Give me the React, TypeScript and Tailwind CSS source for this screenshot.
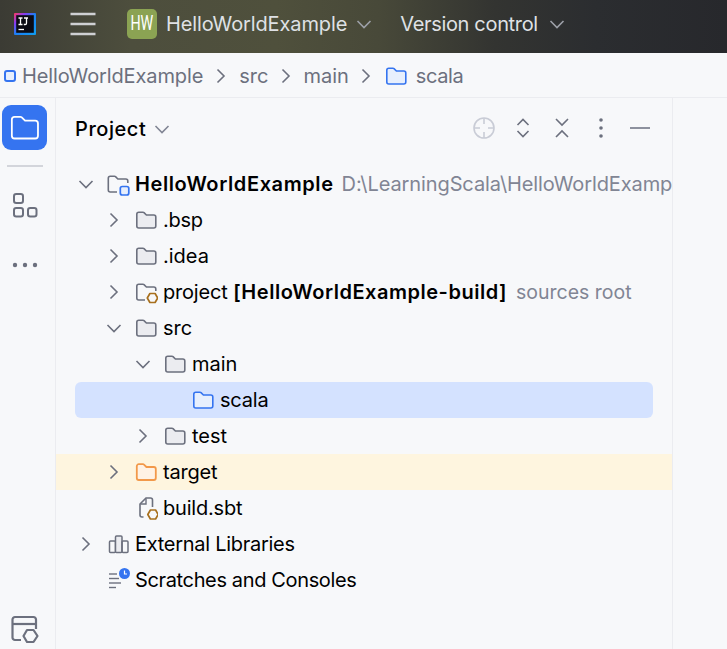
import React from "react";

const Chev = ({ dir, color = "#6c707e", size = 24 }: { dir: "r" | "d"; color?: string; size?: number }) => (
  <svg width={size} height={size} viewBox="0 0 24 24" fill="none" stroke={color} strokeWidth={1.6} className="shrink-0">
    {dir === "r" ? <path d="M8.5 5.5 L15 12 L8.5 18.5" /> : <path d="M5.5 9 L12 15.5 L18.5 9" />}
  </svg>
);

const folderPath = "M2.8 6.2 A2 2 0 0 1 4.8 4.2 H9 A1.5 1.5 0 0 1 10 4.6 L12.4 7 H19.8 A2 2 0 0 1 21.8 9 V18 A2 2 0 0 1 19.8 20 H4.8 A2 2 0 0 1 2.8 18 Z";

const Folder = ({ fill = "#ebecf0", stroke = "#6c707e", w = 1.6 }: { fill?: string; stroke?: string; w?: number }) => (
  <svg width="24" height="24" viewBox="0 0 24 24" className="shrink-0">
    <path d={folderPath} fill={fill} stroke={stroke} strokeWidth={w} />
  </svg>
);

const Hexagon = ({ cx, cy }: { cx: number; cy: number }) => (
  <path
    d={`M${cx - 2.6} ${cy - 4.5} H${cx + 2.6} L${cx + 5.2} ${cy} L${cx + 2.6} ${cy + 4.5} H${cx - 2.6} L${cx - 5.2} ${cy} Z`}
    fill="#f7f8fa"
    stroke="#a8701e"
    strokeWidth={1.7}
    strokeLinejoin="round"
  />
);

const RootIcon = () => (
  <svg width="24" height="24" viewBox="0 0 24 24" className="shrink-0">
    <path d="M11 20 H4.3 A2 2 0 0 1 2.3 18 V6.2 A2 2 0 0 1 4.3 4.2 H8.5 A1.5 1.5 0 0 1 9.5 4.6 L11.9 7 H19.8 A2 2 0 0 1 21.8 9 V11" fill="none" stroke="#6c707e" strokeWidth={1.6} />
    <rect x="14.3" y="14.5" width="8.5" height="8.5" rx="2" fill="#e7effd" stroke="#3574f0" strokeWidth={1.7} />
  </svg>
);

const ProjectFolderIcon = () => (
  <svg width="24" height="24" viewBox="0 0 24 24" className="shrink-0">
    <path d="M11 20 H4.8 A2 2 0 0 1 2.8 18 V6.2 A2 2 0 0 1 4.8 4.2 H9 A1.5 1.5 0 0 1 10 4.6 L12.4 7 H19.8 A2 2 0 0 1 21.8 9 V11" fill="none" stroke="#6c707e" strokeWidth={1.6} />
    <Hexagon cx={18.5} cy={18} />
  </svg>
);

const SbtIcon = () => (
  <svg width="24" height="24" viewBox="0 0 24 24" className="shrink-0">
    <path d="M9.5 21 H8 A2 2 0 0 1 6 19 V8 L12 2 H16.5 A2 2 0 0 1 18.5 4 V11" fill="#f7f8fa" stroke="#6c707e" strokeWidth={1.6} />
    <path d="M12 2.5 V8 H6.3" fill="none" stroke="#6c707e" strokeWidth={1.4} />
    <Hexagon cx={19} cy={18.5} />
  </svg>
);

const LibIcon = () => (
  <svg width="24" height="24" viewBox="0 0 24 24" className="shrink-0" fill="#ebecf0" stroke="#6c707e" strokeWidth={1.5}>
    <rect x="3.5" y="9" width="6" height="11.5" rx="1" fill="none" />
    <rect x="9.5" y="4" width="6.5" height="16.5" rx="1" />
    <rect x="16" y="9" width="6" height="11.5" rx="1" fill="none" />
  </svg>
);

const ScratchIcon = () => (
  <svg width="24" height="24" viewBox="0 0 24 24" className="shrink-0">
    <g stroke="#6c707e" strokeWidth={1.4} fill="none">
      <path d="M3 6 H11" />
      <path d="M3 10.5 H13" />
      <path d="M3 15 H15" />
      <path d="M3 19.5 H10" />
    </g>
    <circle cx="18.5" cy="5.5" r="5.5" fill="#3574f0" />
    <path d="M18.5 2.5 V6 H21" stroke="#fff" strokeWidth={1.2} fill="none" />
  </svg>
);

type Row = { pl: string; chev?: "r" | "d"; icon: React.ReactNode; text: React.ReactNode; tr?: string };

const rows: Row[] = [
  {
    pl: "pl-[18px]",
    chev: "d",
    icon: <RootIcon />,
    text: (
      <>
        <span className="font-semibold tracking-[0.6px]">HelloWorldExample</span>
        <span className="ml-[8px] text-[#818594] tracking-[-0.1px]">D:\LearningScala\HelloWorldExample</span>
      </>
    ),
  },
  { pl: "pl-[46px]", chev: "r", icon: <Folder />, text: ".bsp", tr: "tracking-[-0.3px]" },
  { pl: "pl-[46px]", chev: "r", icon: <Folder />, text: ".idea" },
  {
    pl: "pl-[46px]",
    chev: "r",
    icon: <ProjectFolderIcon />,
    text: (
      <>
        <span className="tracking-[-0.2px]">project</span>{" "}
        <span className="font-semibold tracking-[0.52px]">[HelloWorldExample-build]</span>
        <span className="ml-[9px] text-[#818594] text-[19.5px]">sources root</span>
      </>
    ),
  },
  { pl: "pl-[46px]", chev: "d", icon: <Folder />, text: "src" },
  { pl: "pl-[75px]", chev: "d", icon: <Folder />, text: "main" },
  { pl: "pl-[84px] ml-[19px] mr-[19px] rounded-[6px] bg-[#d4e2ff]", icon: <Folder fill="#e7effd" stroke="#3574f0" />, text: "scala", tr: "tracking-[-0.2px]" },
  { pl: "pl-[75px]", chev: "r", icon: <Folder />, text: "test" },
  { pl: "pl-[46px] bg-[#fef5df]", chev: "r", icon: <Folder fill="#fff2e4" stroke="#f2994a" w={1.8} />, text: "target", tr: "tracking-[-0.2px]" },
  { pl: "pl-[46px]", icon: <SbtIcon />, text: "build.sbt", tr: "tracking-[-0.2px]" },
  { pl: "pl-[18px]", chev: "r", icon: <LibIcon />, text: "External Libraries", tr: "tracking-[-0.28px]" },
  { pl: "pl-[18px]", icon: <ScratchIcon />, text: "Scratches and Consoles", tr: "tracking-[-0.36px]" },
];

export default function App() {
  return (
    <div className="w-[727px] h-[649px] overflow-hidden flex flex-col bg-[#f7f8fa] text-[20px] text-[#000000] font-['Inter',sans-serif]">
      {/* Title bar */}
      <header className="h-[53px] shrink-0 flex items-center pb-[6px] text-[#dfe1e5] bg-[linear-gradient(90deg,#3b3b34_0%,#4d4e3d_18%,#4f503c_38%,#484939_52%,#333431_68%,#2b2d30_82%,#27282c_100%)]">
        <svg width="24" height="24" viewBox="0 0 24 24" className="ml-[13px] shrink-0">
          <defs>
            <linearGradient id="ij" x1="0" y1="0" x2="1" y2="1">
              <stop offset="0" stopColor="#ff3a5c" />
              <stop offset="0.25" stopColor="#8a3bf0" />
              <stop offset="0.5" stopColor="#1d7ff5" />
              <stop offset="1" stopColor="#0f9ff0" />
            </linearGradient>
          </defs>
          <rect x="1" y="1" width="22" height="22" rx="1" fill="url(#ij)" />
          <rect x="3.2" y="3.2" width="17.6" height="17.6" fill="#0b0b14" />
          <path d="M5.5 6 H9.5 M7.5 6 V12.5 M5.5 12.5 H9.5 M11 6 H15 M13.5 6 V11.3 Q13.5 12.5 12.2 12.5 H10.8" stroke="#fff" strokeWidth={1.3} fill="none" />
          <path d="M5.5 17.5 H11" stroke="#fff" strokeWidth={1.3} />
        </svg>
        <svg width="26" height="24" viewBox="0 0 26 24" className="ml-[33px] shrink-0" stroke="#cfd0d3" strokeWidth={2.4}>
          <path d="M0.5 2 H25.5 M0.5 12 H25.5 M0.5 22 H25.5" />
        </svg>
        <div className="ml-[31px] w-[30px] h-[30px] rounded-[5px] bg-[#8ba353] flex items-center justify-center shrink-0 text-white">
          <span className="text-[21px] scale-x-[0.68] font-['Roboto',sans-serif] leading-none">HW</span>
        </div>
        <span className="ml-[9px] tracking-[-0.12px]">HelloWorldExample</span>
        <span className="ml-[5px]"><Chev dir="d" color="#9da0a8" size={24} /></span>
        <span className="ml-[24px] tracking-[-0.33px]">Version control</span>
        <span className="ml-[7px]"><Chev dir="d" color="#9da0a8" size={24} /></span>
      </header>

      {/* Breadcrumbs */}
      <nav className="h-[45px] shrink-0 flex items-center border-b border-[#ebecf0] text-[#6c707e] pt-[1px]">
        <span className="ml-[4px] w-[12px] h-[12px] rounded-[3px] border-2 border-[#3574f0] bg-[#e7effd] shrink-0" />
        <span className="ml-[6px] tracking-[-0.12px]">HelloWorldExample</span>
        <span className="ml-[6px]"><Chev dir="r" size={24} /></span>
        <span className="ml-[6px]">src</span>
        <span className="ml-[6px]"><Chev dir="r" size={24} /></span>
        <span className="ml-[5px]">main</span>
        <span className="ml-[5px]"><Chev dir="r" size={24} /></span>
        <span className="ml-[6px]"><Folder fill="#e7effd" stroke="#3574f0" /></span>
        <span className="ml-[8px] tracking-[-0.4px]">scala</span>
      </nav>

      <div className="flex-1 flex min-h-0">
        {/* Tool window stripe */}
        <aside className="w-[56px] shrink-0 border-r border-[#ebecf0] flex flex-col items-center pr-[6px]">
          <div className="mt-[7px] w-[45px] h-[45px] rounded-[9px] bg-[#3574f0] flex items-center justify-center">
            <svg width="33" height="33" viewBox="0 0 24 24">
              <path d={folderPath} fill="none" stroke="#ffffff" strokeWidth={1.3} />
            </svg>
          </div>
          <div className="mt-[15px] w-[36px] h-[2px] bg-[#d3d5db]" />
          <svg width="26" height="26" viewBox="0 0 26 26" className="mt-[25px]" fill="none" stroke="#6c707e" strokeWidth={2}>
            <rect x="2" y="2" width="9" height="9" rx="2.2" />
            <rect x="2" y="16" width="9" height="8.5" rx="2.2" />
            <rect x="16" y="16" width="8.5" height="8.5" rx="2.2" />
          </svg>
          <svg width="26" height="6" viewBox="0 0 26 6" className="mt-[44px]" fill="#6c707e">
            <circle cx="3" cy="3" r="2.2" />
            <circle cx="13" cy="3" r="2.2" />
            <circle cx="23" cy="3" r="2.2" />
          </svg>
          <svg width="30" height="30" viewBox="0 0 30 30" className="mt-auto mb-[5px]" fill="none" stroke="#6c707e" strokeWidth={2.2}>
            <path d="M11 26 H5 A2.5 2.5 0 0 1 2.5 23.5 V5.5 A2.5 2.5 0 0 1 5 3 H23.5 A2.5 2.5 0 0 1 26 5.5 V15" />
            <path d="M2.5 10 H26" />
            <path d="M17 16 H23.5 L27.5 22 L23.5 28 H17 L13.5 22 Z" strokeLinejoin="round" />
          </svg>
        </aside>

        {/* Project panel */}
        <section className="w-[617px] shrink-0 border-r border-[#ebecf0] flex flex-col overflow-hidden">
          <div className="h-[68px] shrink-0 flex items-center pl-[19px] pb-[6px]">
            <span className="font-medium tracking-[0.55px]">Project</span>
            <span className="ml-[4px]"><Chev dir="d" color="#818594" size={24} /></span>
            <div className="ml-auto flex items-center gap-[15px] mr-[20px] mb-[2px]">
              <svg width="24" height="24" viewBox="0 0 24 24" fill="none" stroke="#c9ccd6" strokeWidth={1.6}>
                <circle cx="12" cy="12" r="10" />
                <path d="M12 2 V8 M12 16 V22 M2 12 H8 M16 12 H22" />
              </svg>
              <svg width="24" height="24" viewBox="0 0 24 24" fill="none" stroke="#6c707e" strokeWidth={1.6}>
                <path d="M6.5 9 L12 3.5 L17.5 9 M6.5 15 L12 20.5 L17.5 15" />
              </svg>
              <svg width="24" height="24" viewBox="0 0 24 24" fill="none" stroke="#6c707e" strokeWidth={1.6}>
                <path d="M6 3 L12 9 L18 3 M6 21 L12 15 L18 21" />
              </svg>
              <svg width="24" height="24" viewBox="0 0 24 24" fill="#6c707e">
                <circle cx="12" cy="4" r="1.8" />
                <circle cx="12" cy="12" r="1.8" />
                <circle cx="12" cy="20" r="1.8" />
              </svg>
              <svg width="24" height="24" viewBox="0 0 24 24" stroke="#818594" strokeWidth={1.8}>
                <path d="M2 12 H22" />
              </svg>
            </div>
          </div>
          <div className="flex flex-col">
            {rows.map((r, i) => (
              <div key={i} className={`h-[36px] flex items-center whitespace-nowrap shrink-0 ${r.pl}`}>
                <span className="w-[24px] mr-[8px] shrink-0 flex">{r.chev ? <Chev dir={r.chev} /> : null}</span>
                {r.icon}
                <span className={`ml-[5px] ${r.tr ?? ""}`}>{r.text}</span>
              </div>
            ))}
          </div>
        </section>
        <div className="flex-1" />
      </div>
    </div>
  );
}
